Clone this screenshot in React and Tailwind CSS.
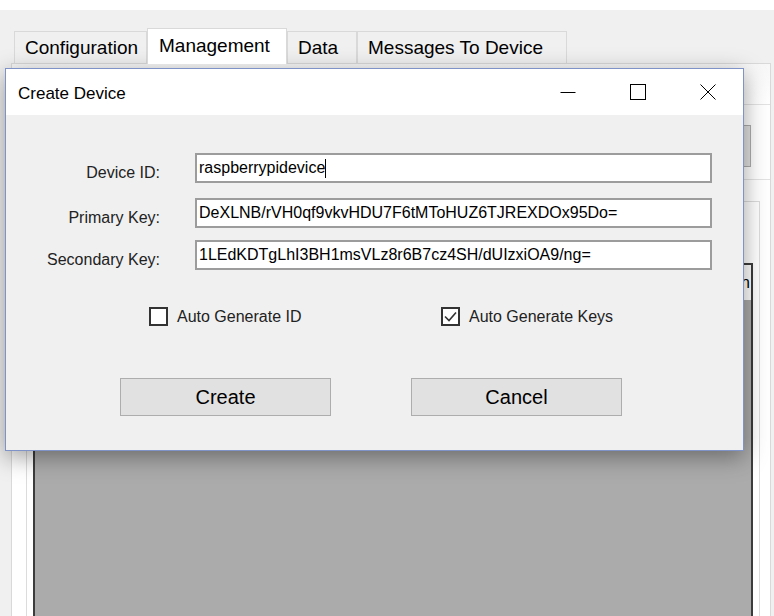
import React from "react";

const tabs = [
  { label: "Configuration", width: "w-[133px]", active: false },
  { label: "Management", width: "w-[140px]", active: true },
  { label: "Data", width: "w-[70px]", active: false },
  { label: "Messages To Device", width: "w-[210px]", active: false },
];

function Tab({ label, width, active }) {
  if (active) {
    return (
      <div className={`${width} h-[36px] -mb-px relative z-10 flex items-center pl-[11px] bg-white border border-b-0 border-[#d9d9d9] text-[19px]`}>
        {label}
      </div>
    );
  }
  return (
    <div className={`${width} h-[32px] flex items-center pl-[10px] pt-[1px] bg-[#f0f0f0] border border-b-0 border-[#d9d9d9] text-[19px]`}>
      {label}
    </div>
  );
}

function TitleButton({ children }) {
  return <div className="w-[70px] h-full flex items-center justify-center">{children}</div>;
}

function TextBox({ value, caret }) {
  return (
    <div className="w-[517px] h-[30px] bg-white border-2 border-[#9c9c9c] flex items-center pl-[2px] text-[16px] whitespace-nowrap overflow-hidden">
      <span>{value}</span>
      {caret && <span className="inline-block w-px h-[19px] bg-black" />}
    </div>
  );
}

function FieldRow({ label, value, caret, className }) {
  return (
    <div className={`flex items-start ${className || ""}`}>
      <div className="w-[154px] text-right pt-[10px] leading-[20px] text-[16px] text-[#222]">{label}</div>
      <div className="ml-[35px]">
        <TextBox value={value} caret={caret} />
      </div>
    </div>
  );
}

function CheckBox({ label, checked }) {
  return (
    <div className="flex items-center h-[19px]">
      <div className="w-[19px] h-[19px] bg-white border-2 border-[#333] flex items-center justify-center">
        {checked && (
          <svg width="15" height="15" viewBox="0 0 15 15">
            <path d="M2 7.5 L6 11.5 L13 3.5" fill="none" stroke="#333" strokeWidth="1.6" />
          </svg>
        )}
      </div>
      <span className="ml-[9px] text-[16px] leading-[19px] text-[#222]">{label}</span>
    </div>
  );
}

function DialogButton({ label }) {
  return (
    <div className="w-[211px] h-[38px] bg-[#e1e1e1] border border-[#adadad] flex items-center justify-center text-[20px]">
      {label}
    </div>
  );
}

export default function App() {
  return (
    <div className="w-[774px] h-[616px] relative overflow-hidden bg-[#f0f0f0] text-black font-['Liberation_Sans',Arial,sans-serif]">
      <div className="h-[10px] bg-white" />
      <div className="pt-[18px] pl-[11px] pr-[3px]">
        <div className="flex items-end h-[35px] pl-[3px]">
          {tabs.map((t) => (
            <Tab key={t.label} {...t} />
          ))}
        </div>
        <div className="h-[560px] bg-white border border-[#d9d9d9] flex flex-col">
          <div className="h-[40px] bg-gradient-to-b from-[#f7f7f7] to-white" />
          <div className="h-px bg-[#e3e3e3]" />
          <div className="h-[74px] flex items-start justify-end pr-[19px] pt-[20px]">
            <div className="w-[120px] h-[42px] bg-[#e1e1e1] border border-[#adadad]" />
          </div>
          <div className="h-px bg-[#e3e3e3]" />
          <div className="mt-[21px] ml-[14px] mr-[10px] flex-1 border border-[#dcdcdc] pt-[61px] px-[6px] flex flex-col">
            <div className="flex-1 border-2 border-[#3c3c3c] bg-[#ababab] flex flex-col">
              <div className="h-[35px] bg-white flex items-center justify-end pr-[1px] text-[16px]">
                <span>n</span>
              </div>
            </div>
          </div>
        </div>
      </div>

      {/* Create Device dialog */}
      <div className="absolute left-[5px] top-[68px] w-[739px] h-[383px] border border-[#7f93c9] bg-[#f0f0f0] flex flex-col shadow-[0_6px_22px_rgba(0,0,0,0.38)]">
        <div className="h-[46px] bg-white flex items-center shrink-0">
          <div className="flex-1 pl-[12px] pt-[3px] text-[17px]">Create Device</div>
          <div className="flex h-full">
            <TitleButton>
              <svg width="16" height="16" viewBox="0 0 16 16">
                <path d="M0.5 8.5 H15.5" stroke="#000" strokeWidth="1" />
              </svg>
            </TitleButton>
            <TitleButton>
              <svg width="16" height="16" viewBox="0 0 16 16">
                <rect x="0.5" y="0.5" width="15" height="15" fill="none" stroke="#000" strokeWidth="1" />
              </svg>
            </TitleButton>
            <TitleButton>
              <svg width="16" height="16" viewBox="0 0 16 16">
                <path d="M0.5 0.5 L15.5 15.5 M15.5 0.5 L0.5 15.5" stroke="#000" strokeWidth="1" />
              </svg>
            </TitleButton>
          </div>
        </div>
        <div className="flex-1 pt-[38px]">
          <FieldRow label="Device ID:" value="raspberrypidevice" caret />
          <FieldRow className="mt-[15px]" label="Primary Key:" value="DeXLNB/rVH0qf9vkvHDU7F6tMToHUZ6TJREXDOx95Do=" />
          <FieldRow className="mt-[12px]" label="Secondary Key:" value="1LEdKDTgLhI3BH1msVLz8r6B7cz4SH/dUIzxiOA9/ng=" />
          <div className="flex mt-[37px] ml-[143px]">
            <div className="w-[292px]">
              <CheckBox label="Auto Generate ID" />
            </div>
            <CheckBox label="Auto Generate Keys" checked />
          </div>
          <div className="flex mt-[52px] ml-[114px] gap-[80px]">
            <DialogButton label="Create" />
            <DialogButton label="Cancel" />
          </div>
        </div>
      </div>
    </div>
  );
}
